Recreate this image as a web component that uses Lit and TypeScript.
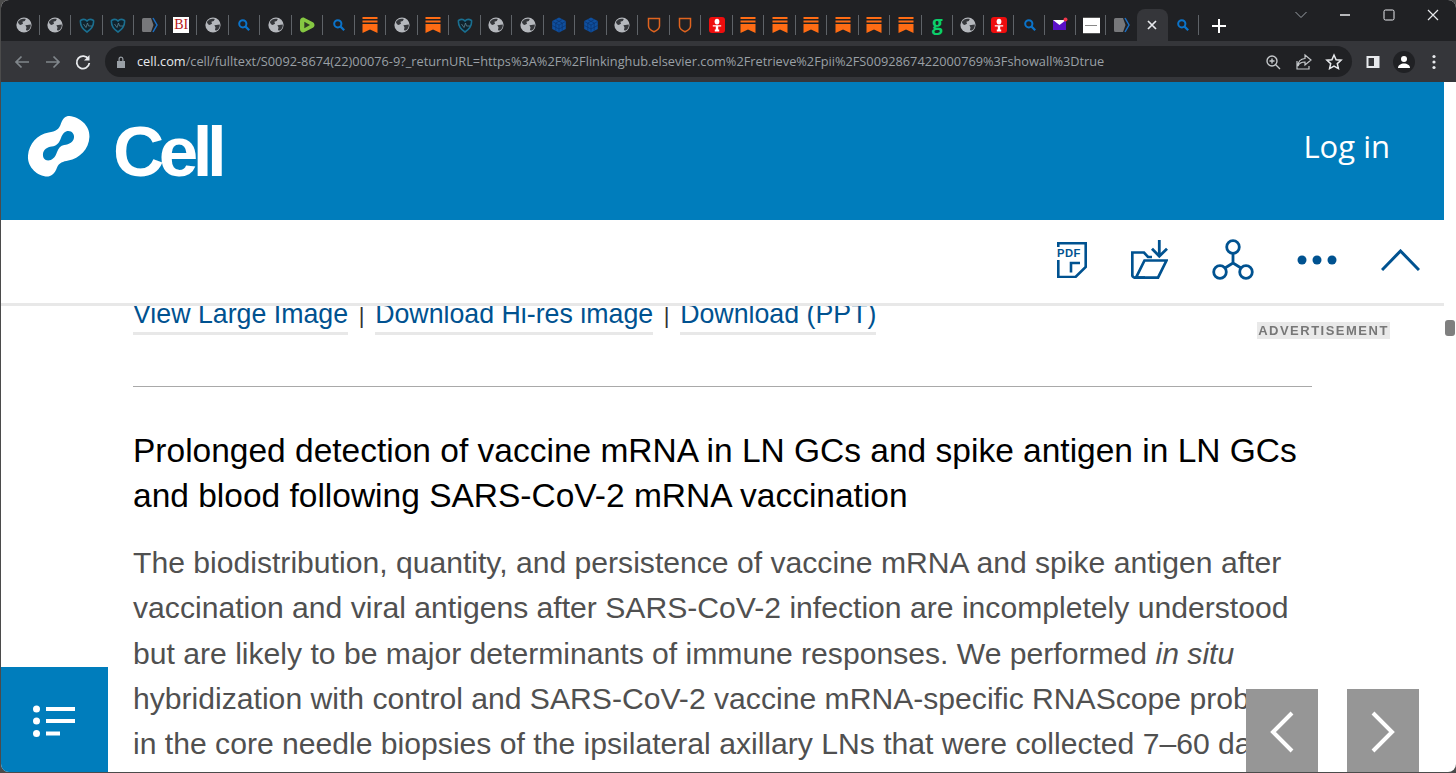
import { LitElement, html, css } from "lit";
import { customElement } from "lit/decorators.js";

const globe = html`<svg class="ic" viewBox="0 0 16 16"><circle cx="8" cy="8" r="7.600" fill="#b5b8bd"/><path fill="#35373b" d="M1.800 5C3.600 2 7 1 9.800 2L8.800 4 6.400 4.800 7 6.800 4.600 8 3 7.200zM9.400 8.200l5.400-.6c.2 2.400-.8 4.600-2.800 6L9.900 13.200 10.500 10.600z"/></svg>`;
const search = html`<svg class="ic" viewBox="0 0 16 16"><circle cx="6.800" cy="6.800" r="3.600" fill="none" stroke="#0b73c9" stroke-width="2"/><path d="M9.600 9.600l3.600 3.600" stroke="#0b73c9" stroke-width="2.200"/></svg>`;
const teal = html`<svg class="ic" viewBox="0 0 16 16"><path d="M1.500 3.500C4 1.800 6.500 2.200 8 4c1.500-1.800 4-2.200 6.500-.5C15 8 12 12.500 8 15 4 12.500 1 8 1.500 3.500z" fill="#10222c" stroke="#1a6f90" stroke-width="1.600"/><path d="M4.500 7l2.500 3.500L8.500 6l1 3h3.500" fill="none" stroke="#5a8291" stroke-width=".8"/></svg>`;
const arrow = html`<svg class="ic" viewBox="0 0 16 16"><path d="M0 2.500a1.500 1.500 0 0 1 1.500-1.500H9l2.500 7L9 15H1.500A1.500 1.500 0 0 1 0 13.500z" fill="#77787b"/><path d="M11 1l4 7-4 7" fill="none" stroke="#1a6fc4" stroke-width="1.500"/></svg>`;
const mark = html`<svg class="ic" viewBox="0 0 16 16"><path fill="#ff6c14" d="M.5 0h15v2H.5zM.5 3.500h15v2H.5zM.5 7h15v9L8 12.500.5 16z"/></svg>`;
const cube = html`<svg class="ic" viewBox="0 0 16 16"><path fill="#0f4f9e" d="M8 .5l6.800 3.600v7.800L8 15.500 1.200 11.900V4.100z"/><path d="M1.500 4.500L8 8l6.500-3.500M8 8v7.500M4.700 2.500l6.500 3.500M11.300 2.500L4.800 6M4.800 6v7.500M11.200 6v7.500M1.500 8.500L8 12l6.500-3.500" fill="none" stroke="#0a2f66" stroke-width=".6"/></svg>`;
const shield = html`<svg class="ic" viewBox="0 0 16 16"><path d="M2.500 1.500h11v7.500c0 2.800-2.500 4.500-5.500 5.800C5 13.500 2.500 11.800 2.500 9z" fill="none" stroke="#e0641f" stroke-width="1.500"/></svg>`;
const red = html`<svg class="ic" viewBox="0 0 16 16"><rect width="16" height="16" rx="3" fill="#ee0d0d"/><ellipse cx="8" cy="4.600" rx="2.400" ry="2.900" fill="#fff"/><path fill="#fff" d="M3.800 8.200h8.400v1.200H9.200V12.500h1v2H5.800v-2h1V9.400h-3z"/></svg>`;
const rumble = html`<svg class="ic" viewBox="0 0 16 16"><path fill="#85c742" d="M1 4C1 1.300 3.300 0 5.600.9l7.800 4c2.800 1.400 2.800 4.800 0 6.200l-7.800 4C3.300 16 1 14.700 1 12z"/><path fill="#2f3b24" d="M5.300 4.800v6.400L11 8z"/></svg>`;
const mail = html`<svg class="ic" viewBox="0 0 16 16"><rect x="1" y="3" width="13" height="10" fill="#5a10c8"/><path d="M1 3h13L7.500 8z" fill="#fff"/><circle cx="13.500" cy="2.500" r="2" fill="#f0364a"/></svg>`;
const bi = html`<span class="bi">BI</span>`;
const doc = html`<span class="doc"><span></span></span>`;
const gee = html`<span class="gee">g</span>`;
const close = html`<svg class="ic" viewBox="0 0 16 16"><path d="M4 4l8 8M12 4l-8 8" stroke="#e8eaed" stroke-width="1.700"/></svg>`;

const tabs = [
  globe, globe, teal, teal, arrow, bi, globe, search, globe, rumble, search, mark, globe, mark, teal,
  globe, globe, cube, cube, globe, shield, shield, red, mark, mark, mark, mark, mark, mark, gee,
  globe, red, search, mail, doc, arrow, close, search,
];

@customElement("app-root")
export class AppRoot extends LitElement {
  static styles = css`
    :host { display: block; height: 773px; overflow: hidden; background: #4b4b4b; font-family: "Liberation Sans", Arial, sans-serif; }
    .window { height: 772px; margin-left: 1px; display: flex; flex-direction: column; background: #fff; border-radius: 8px; overflow: hidden; position: relative; }

    .strip { height: 41px; flex: none; background: #202124; display: flex; align-items: flex-end; padding-left: 7px; }
    .tabs { display: flex; height: 32px; }
    .tab { width: 31.500px; height: 32px; display: flex; align-items: center; justify-content: center; position: relative; flex: none; }
    .tab.tight { width: 30.700px; }
    .tab.sep::after { content: ""; position: absolute; right: 0; top: 6px; height: 20px; width: 1px; background: #5f6368; }
    .tab.active { background: #35363a; border-radius: 8px 8px 0 0; }
    .ic { width: 16px; height: 16px; display: block; }
    .bi { width: 16px; height: 16px; background: #fff; color: #b5161b; font: 400 14px/16px "Liberation Serif", serif; text-align: center; }
    .doc { width: 17px; height: 17px; background: #fff; border: 1px solid #555; box-sizing: border-box; border-width: 1px 0; display: flex; align-items: center; justify-content: center; }
    .doc span { display: block; width: 12px; height: 1px; background: #888; }
    .gee { color: #0bcf6b; font: 700 19px/16px "Open Sans", sans-serif; height: 20px; }
    .plus { width: 18px; height: 18px; margin: 0 0 6px 11px; }
    .winctl { margin-left: auto; align-self: flex-start; display: flex; align-items: center; height: 30px; padding-right: 15px; gap: 28px; }
    .winctl svg { width: 16px; height: 16px; display: block; }

    .toolbar { height: 41px; flex: none; background: #35363a; display: flex; align-items: center; padding: 0 0 0 12px; box-sizing: border-box; }
    .toolbar svg { width: 18px; height: 18px; flex: none; display: block; }
    .nav { display: flex; gap: 12.500px; width: 92px; flex: none; }
    .pill { flex: none; width: 1247px; height: 31px; background: #202124; border-radius: 16px; display: flex; align-items: center; padding: 0 9px 0 9px; box-sizing: border-box; margin-right: 12px; }
    .toolbar .lock { width: 14px; height: 14px; margin-right: 9px; }
    .url { font: 400 12.760px/31px "Open Sans", sans-serif; color: #9aa0a6; white-space: nowrap; flex: 1; }
    .url b { font-weight: 400; color: #e8eaed; }
    .pilltools { display: flex; gap: 12.500px; }
    .tools { display: flex; align-items: center; gap: 10.500px; }
    .avatar { width: 22px; height: 22px; border-radius: 50%; background: #202124; display: flex; align-items: center; justify-content: center; }
    .toolbar .avatar svg { width: 14px; height: 14px; }

    .page { flex: 1; min-height: 0; display: flex; }
    .content { flex: 1; min-width: 0; display: flex; flex-direction: column; position: relative; }
    .gutter { width: 12px; flex: none; padding-top: 238px; box-sizing: border-box; }
    .thumb { width: 10px; height: 16px; background: #7f7f7f; border-radius: 3px; margin-left: 1px; }

    .brand { height: 138px; flex: none; background: #007dbc; display: flex; align-items: center; padding: 0 54px 0 26px; color: #fff; }
    .logo { width: 64px; height: 64px; display: block; margin-top: -11px; }
    .word { font: 700 71px/1 "Liberation Sans", sans-serif; letter-spacing: -5.500px; margin: 0 0 0 22px; }
    .login { margin-left: auto; font: 400 31px/1 "Open Sans", sans-serif; margin-top: -10px; }

    .actions { height: 86px; flex: none; box-sizing: border-box; background: #fff; border-bottom: 3px solid #e8e8e8; display: flex; align-items: center; justify-content: flex-end; gap: 43.750px; padding: 0 24px 4px 0; position: relative; z-index: 1; }
    .actions svg { display: block; flex: none; }

    .article { flex: 1; min-height: 0; overflow: hidden; padding: 0 132px 0 132px; color: #505050; }
    .links { display: flex; align-items: baseline; font-size: 26.750px; line-height: 30px; margin-top: -7px; height: 30px; color: #333; }
    .links a { color: #005290; border-bottom: 3px solid #e8e8e8; height: 33px; display: block; white-space: nowrap; }
    .links i { font-style: normal; width: 27px; text-align: center; font-size: 22px; }
    hr { border: 0; border-top: 1px solid #a9a9a9; margin: 57px 0 0; }
    h2 { margin: 41px -1px 0 0; font-size: 33.500px; line-height: 45px; font-weight: 400; color: #000; }
    p { margin: 22px -40px 0 0; font-size: 30.130px; line-height: 45.250px; }
    p span { display: block; white-space: nowrap; }

    .ad { position: absolute; left: 1256px; top: 240px; width: 133px; height: 17px; background: #e9e9e9; color: #777; font: 700 13px/17px "Liberation Sans", sans-serif; letter-spacing: 1.500px; text-align: center; filter: blur(.7px); white-space: nowrap; }
    .toc { position: absolute; left: 0; bottom: 0; width: 107px; height: 105px; background: #007dbc; display: flex; align-items: center; justify-content: center; padding-top: 2px; box-sizing: border-box; }
    .toc svg { width: 44px; height: 32px; display: block; }
    .arrowbtn { position: absolute; bottom: 0; width: 72px; height: 83px; background: #969696; display: flex; align-items: center; justify-content: center; }
    .arrowbtn svg { width: 24px; height: 42px; display: block; margin-top: 3px; }
    .prev { left: 1245px; }
    .next { left: 1346px; }
  `;

  private tabClass(i: number) {
    const active = i === 36;
    const noSep = i === 35 || i === 36;
    return `tab${active ? " active" : ""}${noSep ? "" : " sep"}${i >= 30 ? " tight" : ""}`;
  }

  render() {
    const s = "#c4c7ca";
    return html`
      <div class="window">
        <div class="strip">
          <div class="tabs">${tabs.map((t, i) => html`<div class=${this.tabClass(i)}>${t}</div>`)}</div>
          <svg class="plus" viewBox="0 0 18 18"><path d="M9 2v14M2 9h14" stroke="#fff" stroke-width="2"/></svg>
          <div class="winctl">
            <svg viewBox="0 0 16 16"><path d="M2.500 5l5.500 5.500L13.500 5" fill="none" stroke="#9aa0a6" stroke-width="1"/></svg>
            <svg viewBox="0 0 16 16"><path d="M3 8h10" stroke="#e8eaed" stroke-width="1.300"/></svg>
            <svg viewBox="0 0 16 16"><rect x="3" y="3" width="10" height="10" rx="1.500" fill="none" stroke="#e8eaed" stroke-width="1"/></svg>
            <svg viewBox="0 0 16 16"><path d="M3 3l10 10M13 3L3 13" stroke="#e8eaed" stroke-width="1.200"/></svg>
          </div>
        </div>
        <div class="toolbar">
          <div class="nav">
            <svg viewBox="0 0 18 18"><path d="M16 9H3M8.500 3.500L3 9l5.500 5.500" fill="none" stroke="#80868b" stroke-width="1.700"/></svg>
            <svg viewBox="0 0 18 18"><path d="M2 9h13M9.500 3.500L15 9l-5.500 5.500" fill="none" stroke="#80868b" stroke-width="1.700"/></svg>
            <svg viewBox="0 0 18 18"><path d="M14.500 6.200A6.300 6.300 0 1 0 15.300 10" fill="none" stroke="#e8eaed" stroke-width="1.800"/><path d="M15.500 2v5.500H10z" fill="#e8eaed"/></svg>
          </div>
          <div class="pill">
            <svg class="lock" viewBox="0 0 14 14"><path fill="#9aa0a6" d="M3 6h8v7H3zM4.500 6V4a2.500 2.500 0 0 1 5 0v2H8.300V4a1.300 1.300 0 0 0-2.600 0v2z"/></svg>
            <span class="url"><b>cell.com</b>/cell/fulltext/S0092-8674(22)00076-9?_returnURL=https%3A%2F%2Flinkinghub.elsevier.com%2Fretrieve%2Fpii%2FS0092867422000769%3Fshowall%3Dtrue</span>
            <div class="pilltools">
              <svg viewBox="0 0 18 18"><circle cx="8" cy="8" r="5" fill="none" stroke=${s} stroke-width="1.400"/><path d="M11.500 11.500l4.500 4.500M5.500 8h5M8 5.500v5" stroke=${s} stroke-width="1.400"/></svg>
              <svg viewBox="0 0 18 18"><path d="M10 2l6 5-6 5V9C6 9 4 10.500 3 13c0-4 2.500-7 7-7.500zM2 8v8h12v-3" fill="none" stroke=${s} stroke-width="1.200"/></svg>
              <svg viewBox="0 0 18 18"><path d="M9 2l2.100 4.700 5 .5-3.800 3.400 1.100 5L9 13l-4.400 2.600 1.100-5L1.900 7.200l5-.5z" fill="none" stroke="#e8eaed" stroke-width="1.500"/></svg>
            </div>
          </div>
          <div class="tools">
            <svg viewBox="0 0 18 18"><path fill="#e8eaed" d="M2.500 3h13v12h-13z"/><path fill="#35363a" d="M4.500 5h5.500v8H4.500z"/></svg>
            <div class="avatar"><svg viewBox="0 0 14 14"><circle cx="7" cy="4" r="3" fill="#fff"/><path d="M1 13c0-3 3-4.500 6-4.500s6 1.500 6 4.500z" fill="#fff"/></svg></div>
            <svg viewBox="0 0 18 18"><circle cx="9" cy="3.500" r="1.600" fill="#e8eaed"/><circle cx="9" cy="9" r="1.600" fill="#e8eaed"/><circle cx="9" cy="14.500" r="1.600" fill="#e8eaed"/></svg>
          </div>
        </div>
        <div class="page">
          <div class="content">
            <header class="brand">
              <svg class="logo" viewBox="27 113 62 62"><path fill="#fff" fill-rule="evenodd" d="M68 115C78 116 88 124 87.500 135C87 147 78 156 67 158C62 159 58 160 56 165C54 171 50 174 45 173.500C35 172 27 163 28 153C29 142 37 133 48 131C55 130 58 128 60 122C62 117 64 115 68 115ZM67 129.500C71 129.500 73 133 72.500 136C72 140 68 142.500 63 143C59.500 143.500 57.500 146 56 150C54.500 155 51 158 47.500 158C44 158 42 155 42.500 151.500C43 147.500 46.500 145 51 144.500C55.500 144 58 141.500 60 136C61.500 132 64 129.500 67 129.500Z"/></svg>
              <h1 class="word">Cell</h1>
              <span class="login">Log in</span>
            </header>
            <div class="actions">
              <svg width="30" height="36" viewBox="0 0 30 36"><path d="M1.300 5V1.300h27.400v23.700L18.500 35H1.300V18" fill="none" stroke="#005290" stroke-width="2.600"/><path d="M14 30.500V21h9" fill="none" stroke="#005290" stroke-width="2.600"/><text x="0" y="15" font-family="Liberation Sans" font-weight="700" font-size="11.200" letter-spacing=".5" fill="#005290">PDF</text></svg>
              <svg width="37" height="39" viewBox="0 0 37 39"><path d="M14 37.700H4a2.700 2.700 0 0 1-2.700-2.700V12.500H13l4 4.500h4" fill="none" stroke="#005290" stroke-width="2.700"/><path d="M5 37.700l8.500-17.200h22L27 37.700z" fill="none" stroke="#005290" stroke-width="2.700"/><path d="M28.300 0v15.500M21 8.700l7.300 7.500 7.700-7.500" fill="none" stroke="#005290" stroke-width="2.800"/></svg>
              <svg width="42" height="41" viewBox="0 0 42 41"><g fill="none" stroke="#005290" stroke-width="2.800"><circle cx="21" cy="8" r="6.300"/><circle cx="8" cy="33" r="6.300"/><circle cx="34" cy="33" r="6.300"/><path d="M21 14.300V24M21 24l-8 5M21 24l8 5"/></g></svg>
              <svg width="40" height="10" viewBox="0 0 40 10"><g fill="#005290"><circle cx="5" cy="5" r="4.500"/><circle cx="20" cy="5" r="4.500"/><circle cx="35" cy="5" r="4.500"/></g></svg>
              <svg width="39" height="22" viewBox="0 0 39 22"><path d="M1 21L19.500 2 38 21" fill="none" stroke="#005290" stroke-width="3"/></svg>
            </div>
            <div class="article">
              <div class="links">
                <a>View Large Image</a><i>|</i><a>Download Hi-res image</a><i>|</i><a>Download (PPT)</a>
              </div>
              <hr />
              <h2>Prolonged detection of vaccine mRNA in LN GCs and spike antigen in LN GCs and blood following SARS-CoV-2 mRNA vaccination</h2>
              <p>
                <span>The biodistribution, quantity, and persistence of vaccine mRNA and spike antigen after</span>
                <span>vaccination and viral antigens after SARS-CoV-2 infection are incompletely understood</span>
                <span>but are likely to be major determinants of immune responses. We performed <em>in situ</em></span>
                <span>hybridization with control and SARS-CoV-2 vaccine mRNA-specific RNAScope probes</span>
                <span>in the core needle biopsies of the ipsilateral axillary LNs that were collected 7–60 days</span>
              </p>
            </div>
            <div class="ad">ADVERTISEMENT</div>
            <div class="toc">
              <svg viewBox="0 0 44 32"><g fill="#fff"><circle cx="3.500" cy="4" r="3.500"/><circle cx="3.500" cy="16" r="3.500"/><circle cx="3.500" cy="28.500" r="3.500"/><rect x="13" y="2" width="29" height="4"/><rect x="13" y="14" width="29" height="4"/><rect x="13" y="26.500" width="14" height="4"/></g></svg>
            </div>
            <div class="arrowbtn prev"><svg viewBox="0 0 24 42"><path d="M22 2L3 21l19 19" fill="none" stroke="#fff" stroke-width="4"/></svg></div>
            <div class="arrowbtn next"><svg viewBox="0 0 24 42"><path d="M2 2l19 19L2 40" fill="none" stroke="#fff" stroke-width="4"/></svg></div>
          </div>
          <div class="gutter"><div class="thumb"></div></div>
        </div>
      </div>
    `;
  }
}
